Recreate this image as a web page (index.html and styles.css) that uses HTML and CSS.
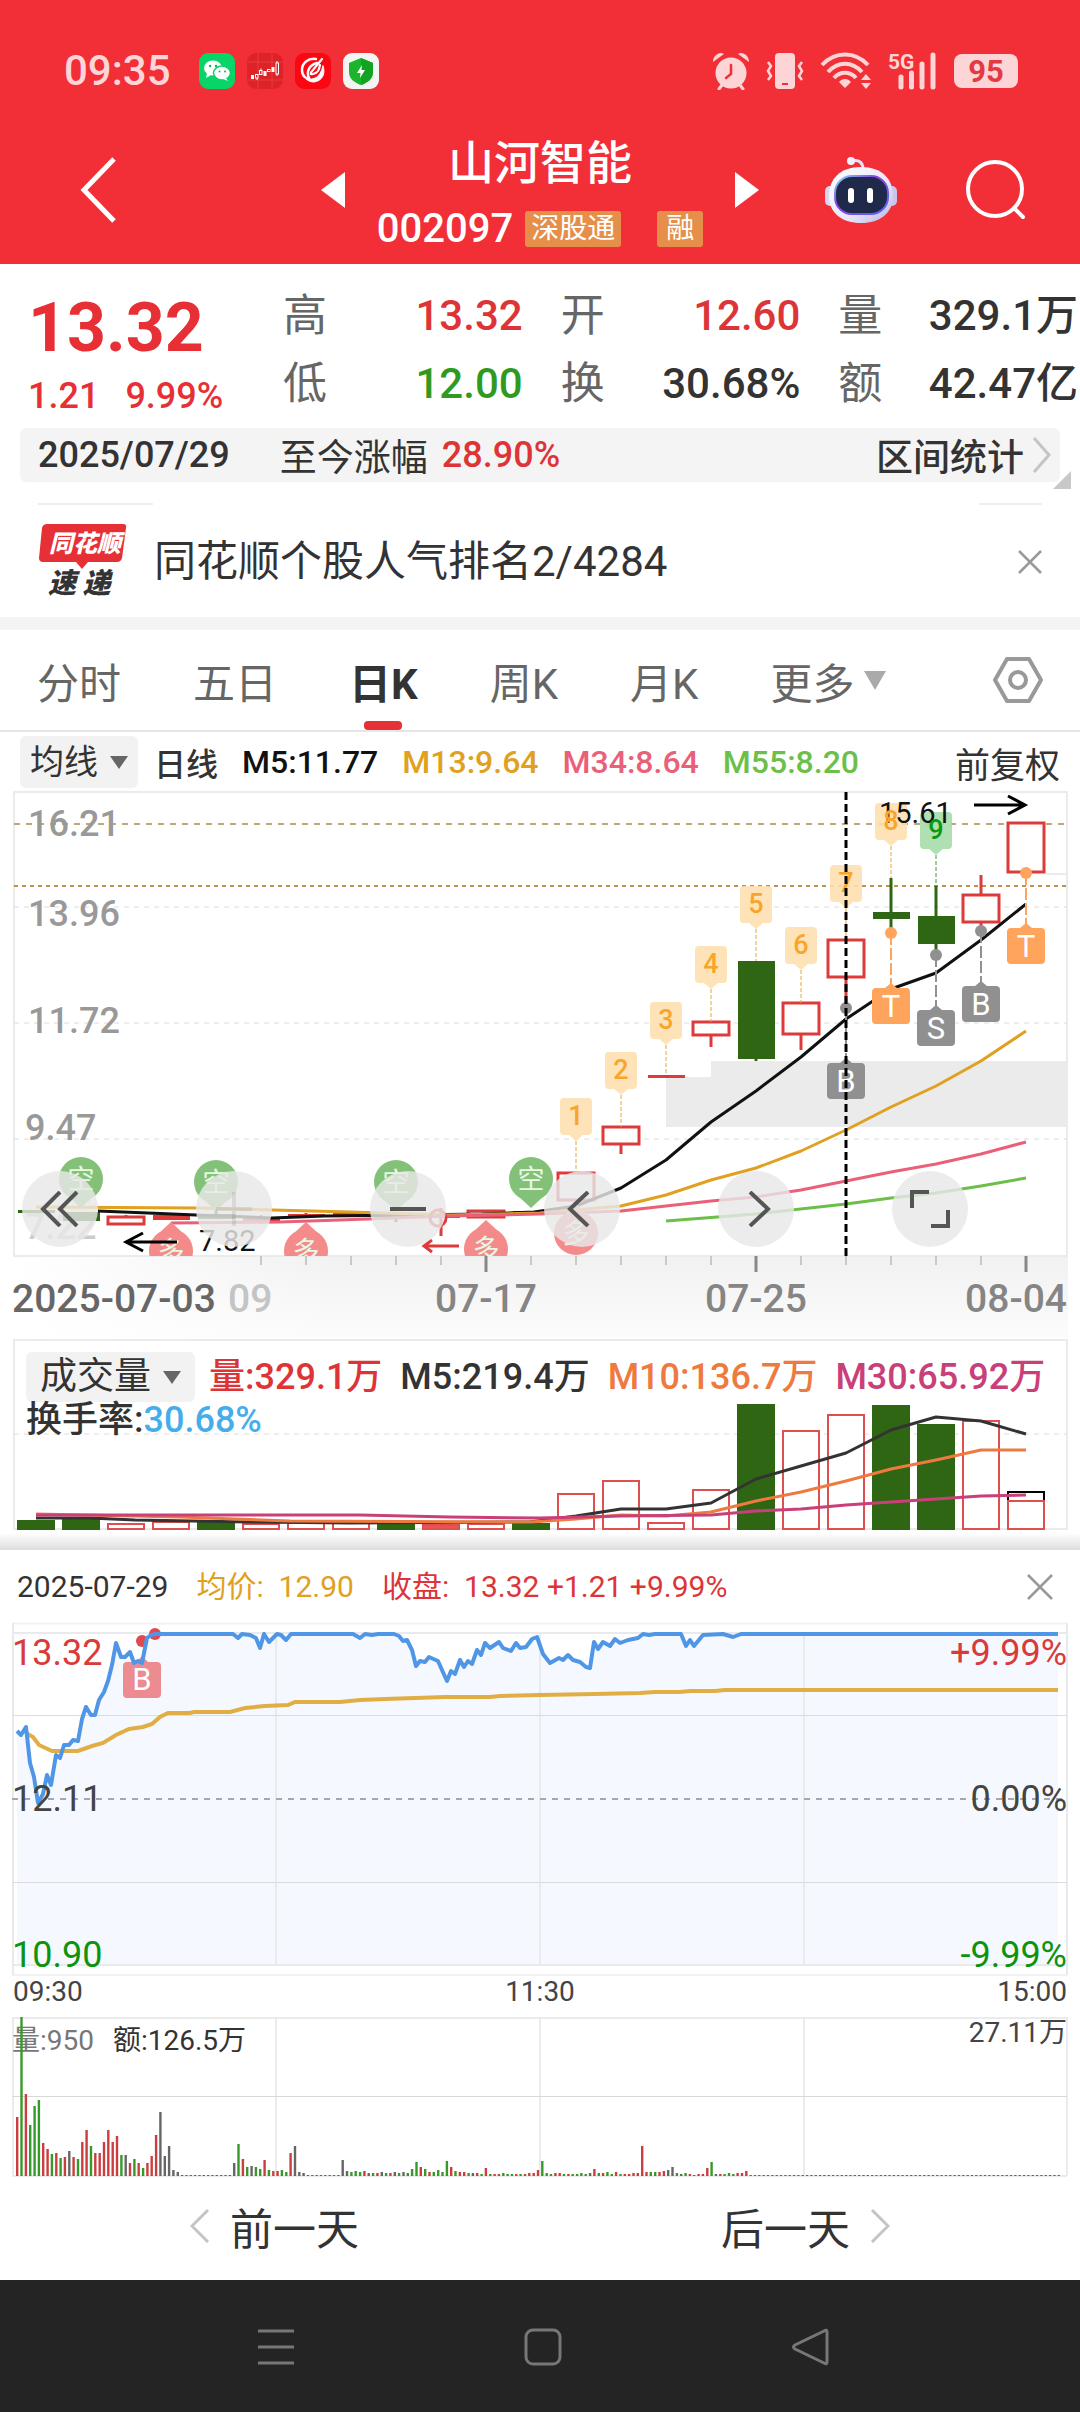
FILE: index.html
```html
<!DOCTYPE html>
<html lang="zh-CN">
  <head>
    <meta charset="UTF-8" />
    <meta name="viewport" content="width=device-width, initial-scale=1.0" />
    <title>山河智能 002097</title>
    <link rel="stylesheet" href="styles.css">
  </head>
  <body>
    <header class="header">
      <div class="status">
        <span class="status__time">09:35</span>
        <div class="status__apps">
          <svg class="app" viewBox="0 0 36 36">
            <rect width="36" height="36" rx="9" fill="#07d568"/>
            <ellipse cx="14" cy="15" rx="9" ry="7.5" fill="#fff"/><path d="M8 20l-1 5 5-3z" fill="#fff"/>
            <ellipse cx="23" cy="20" rx="8.5" ry="7" fill="#fff" stroke="#07d568" stroke-width="1.5"/><path d="M27 25l2 3-5-2z" fill="#fff"/>
            <g fill="#07b558"><circle cx="11" cy="13" r="1.2"/><circle cx="17" cy="13" r="1.2"/><circle cx="20.500" cy="18.500" r="1"/><circle cx="26" cy="18.500" r="1"/></g>
          </svg>
          <svg class="app" viewBox="0 0 36 36">
            <rect width="36" height="36" rx="9" fill="#de2328"/>
            <path d="M0 9h36M0 27h36M11 0v36M25 0v36" stroke="#ee4a4e" stroke-width=".6"/>
            <g fill="#fff"><rect x="4" y="22" width="3" height="4"/><rect x="16.500" y="18" width="3" height="5"/><rect x="24.500" y="14" width="3" height="5"/></g>
            <g fill="none" stroke="#fff"><rect x="8.500" y="21.500" width="2.500" height="3.500"/><rect x="12.500" y="17.500" width="2.500" height="4"/><rect x="20.500" y="16.500" width="2.500" height="2"/><rect x="29" y="10" width="2.500" height="11"/><path d="M10 25v2M14 15.500v2M30 8v2M30 21v2"/></g>
          </svg>
          <svg class="app" viewBox="0 0 36 36">
            <rect width="36" height="36" rx="9" fill="#fb0712"/>
            <g fill="none" stroke="#fff" stroke-linecap="round">
              <path d="M21 6C13 5 7 10 7 17c0 6 4 9 7 8-3-6 0-13 8-15" stroke-width="2.500"/>
              <path d="M27 6l-9 11c-3 3-3 5 0 4 5-1 6-4 7-9" stroke-width="2.200"/>
              <path d="M28 13c3 8-1 15-9 16-3 0-6-1-8-3 8 1 14-1 17-13z" fill="#fff" stroke-width="1"/>
            </g>
          </svg>
          <svg class="app" viewBox="0 0 36 36">
            <rect width="36" height="36" rx="9" fill="#f3f5f2"/>
            <path d="M18 5l12 5v9c0 7-6 11-12 13-6-2-12-6-12-13v-9z" fill="#1ab52b"/>
            <path d="M18 5l12 5v9c0 7-6 11-12 13z" fill="#13a322"/>
            <path d="M19 12l-5 8h3.500l-.500 5 5-8h-3.500z" fill="#fff"/>
          </svg>
        </div>
        <div class="status__system">
          <svg width="38" height="38" viewBox="0 0 38 38">
            <g fill="currentColor"><circle cx="19" cy="21" r="15.500"/><path d="M1 10C1 3 8-1 12 2zM37 10c0-7-7-11-11-8z"/></g>
            <path d="M10 33l-3 4M28 33l3 4" stroke="currentColor" stroke-width="3" stroke-linecap="round"/>
            <path d="M19 13v9l-5 4" fill="none" stroke="#f22f37" stroke-width="2.500" stroke-linecap="round"/>
          </svg>
          <svg width="38" height="38" viewBox="0 0 38 38">
            <rect x="9" y="1" width="20" height="36" rx="4" fill="currentColor"/>
            <path d="M16 32h6" stroke="#f22f37" stroke-width="2"/>
            <path d="M2 10l3 4-3 5 3 5-3 4M36 10l-3 4 3 5-3 5 3 4" fill="none" stroke="currentColor" stroke-width="2.500"/>
          </svg>
          <svg width="52" height="38" viewBox="0 0 52 38">
            <g fill="none" stroke="currentColor" stroke-width="4"><path d="M2 13c13-14 33-14 46 0M8 20c10-11 24-11 34 0M14 26c6-7 16-7 22 0"/></g>
            <path d="M25 36l-6-6c3-4 9-4 12 0zM46 22l5 6H41zM46 37l5-6H41z" fill="currentColor"/>
          </svg>
          <svg width="50" height="46" viewBox="0 -4 50 46">
            <text x="0" y="17" class="status__net">5G</text>
            <path d="M13 35V25M23.500 35V21M34 35V12M45 35V3" stroke="currentColor" stroke-width="5" stroke-linecap="round"/>
          </svg>
          <span class="battery">95</span>
        </div>
      </div>

      <nav class="nav">
        <button class="nav__back" aria-label="返回"><svg width="40" height="68" viewBox="0 0 40 68"><path d="M36 3L6 34l30 31" fill="none" stroke="#fff" stroke-width="5"/></svg></button>
        <button class="nav__prev" aria-label="上一只"><svg width="24" height="36" viewBox="0 0 24 36"><path d="M24 0v36L0 18z" fill="#fff"/></svg></button>
        <div class="nav__stock">
          <h1 class="nav__name">山河智能</h1>
          <div class="nav__code">002097 <span class="tag">深股通</span><span class="tag tag--last">融</span></div>
        </div>
        <button class="nav__next" aria-label="下一只"><svg width="24" height="36" viewBox="0 0 24 36"><path d="M0 0v36l24-18z" fill="#fff"/></svg></button>
        <button class="nav__robot" aria-label="智能助手">
          <svg width="72" height="68" viewBox="0 0 72 68">
            <defs>
              <linearGradient id="shell" x1="0" y1="0" x2="1" y2="1"><stop offset="0" stop-color="#fff"/><stop offset=".6" stop-color="#e9e6fa"/><stop offset="1" stop-color="#b9b4e4"/></linearGradient>
              <linearGradient id="rim" x1="0" y1="0" x2="1" y2="1"><stop offset="0" stop-color="#7ee0f2"/><stop offset=".4" stop-color="#8340e0"/><stop offset="1" stop-color="#5a68f0"/></linearGradient>
            </defs>
            <path d="M27 5c7-2 11 2 11 8" fill="none" stroke="#e5e2f4" stroke-width="3"/>
            <circle cx="26" cy="5" r="4" fill="#f2f0fa"/>
            <rect x="0" y="30" width="12" height="20" rx="5" fill="#d9d6f2"/><rect x="60" y="30" width="12" height="20" rx="5" fill="#c9c5ec"/>
            <path d="M36 11c21 0 32 12 32 29S55 67 36 67 4 57 4 40s11-29 32-29z" fill="url(#shell)"/>
            <rect x="10" y="20" width="53" height="38" rx="17" fill="#1f2949" stroke="url(#rim)" stroke-width="2"/>
            <rect x="23" y="32" width="6" height="15" rx="3" fill="#fff"/><rect x="42" y="32" width="6" height="15" rx="3" fill="#fff"/>
          </svg>
        </button>
        <button class="nav__search" aria-label="搜索"><svg width="62" height="62" viewBox="0 0 62 62"><g fill="none" stroke="#fff" stroke-width="4" stroke-linecap="round"><circle cx="30" cy="30" r="27"/><path d="M49 49l9 9"/></g></svg></button>
      </nav>
    </header>

    <main>
      <section class="quote">
        <div class="quote__main">
          <strong class="quote__price">13.32</strong>
          <div class="quote__change"><span>1.21</span><span>9.99%</span></div>
        </div>
        <dl class="quote__item"><dt>高</dt><dd class="up">13.32</dd><dt>低</dt><dd class="down">12.00</dd></dl>
        <dl class="quote__item"><dt>开</dt><dd class="up">12.60</dd><dt>换</dt><dd>30.68%</dd></dl>
        <dl class="quote__item"><dt>量</dt><dd>329.1万</dd><dt>额</dt><dd>42.47亿</dd></dl>
      </section>

      <div class="range">
        <span class="range__date">2025/07/29</span>
        <span class="range__label">至今涨幅</span>
        <span class="up">28.90%</span>
        <button class="range__stat">区间统计 <svg width="20" height="38" viewBox="0 0 20 38"><path d="M2 2l15 17L2 36" fill="none" stroke="#c4c4c4" stroke-width="3"/></svg></button>
        <svg class="range__corner" width="18" height="18" viewBox="0 0 18 18"><path d="M18 0v18H0z" fill="#c8c8c8"/></svg>
      </div>

      <section class="news">
        <svg class="news__logo" width="90" height="84" viewBox="0 -1 90 84">
          <path d="M9 3h76q4 0 3 4l-4 30q-1 4-5 4H50l-6 7-6-7H5q-4 0-4-4L4 7q1-4 5-4z" fill="#e73035"/>
          <text x="11" y="31" class="logo-top">同花顺</text>
          <text x="10" y="72" class="logo-bottom">速 递</text>
        </svg>
        <a class="news__text" href="#">同花顺个股人气排名2/4284</a>
        <button aria-label="关闭"><svg width="26" height="26" viewBox="0 0 26 26"><path d="M2 2l22 22M24 2L2 24" stroke="#999" stroke-width="2.500"/></svg></button>
      </section>

      <nav class="tabs">
        <button class="tab">分时</button>
        <button class="tab">五日</button>
        <button class="tab tab--active">日K</button>
        <button class="tab">周K</button>
        <button class="tab">月K</button>
        <button class="tab">更多 <svg width="22" height="19" viewBox="0 0 22 19"><path d="M0 0h22L11 19z" fill="#aaa"/></svg></button>
        <button class="tab tab--set" aria-label="设置"><svg width="50" height="48" viewBox="0 0 50 48"><g fill="none" stroke="#999" stroke-width="4" stroke-linejoin="round"><path d="M14 3h22l12 21-12 21H14L2 24z"/><circle cx="25" cy="24" r="8"/></g></svg></button>
      </nav>

      <div class="averages">
        <label class="picker">
          <select aria-label="主图指标"><option>均线</option></select>
          <svg width="18" height="13" viewBox="0 0 18 13"><path d="M0 0h18L9 13z" fill="#666"/></svg>
        </label>
        <span class="averages__unit">日线</span>
        <span class="m5">M5:11.77</span>
        <span class="m13">M13:9.64</span>
        <span class="m34">M34:8.64</span>
        <span class="m55">M55:8.20</span>
        <button class="averages__adjust">前复权</button>
      </div>

      <section class="kline">
        <svg class="chart" id="kline" viewBox="0 0 1080 548">
          <defs>
            <linearGradient id="axis" x1="0" y1="0" x2="0" y2="1"><stop offset="0" stop-color="#f1f1f1"/><stop offset="1" stop-color="#fcfcfc"/></linearGradient>
            <linearGradient id="fade" x1="0" y1="0" x2="1" y2="0"><stop offset="0" stop-color="#fff"/><stop offset="1" stop-color="#fff" stop-opacity="0"/></linearGradient>
            <clipPath id="plot"><rect x="13" y="0" width="1055" height="466"/></clipPath>
          </defs>
          <rect x="14" y="466" width="1054" height="82" fill="url(#axis)"/>
          <rect x="14" y="466" width="330" height="82" fill="url(#fade)"/>
          <rect x="14" y="2" width="1053" height="464" class="frame"/>
          <path d="M666 287h45v-16h357v66H666z" fill="#ebebeb"/>
          <path d="M1046 84h22" class="frame"/>
          <path d="M14 117h1053M14 233h1053M14 349h1053" class="grid"/>
          <path d="M14 34h1053" stroke="#bfa878" stroke-width="2" stroke-dasharray="6 6"/>
          <path d="M14 96h1053" stroke="#c09050" stroke-width="2" stroke-dasharray="4 4"/>
          <g class="scale">
            <text x="28" y="46">16.21</text><text x="28" y="136">13.96</text><text x="28" y="243">11.72</text><text x="25" y="350">9.47</text><text x="25" y="449" fill="#ccc">7.22</text>
          </g>
          <g id="candles"></g>
          <g fill="none" stroke-width="3" stroke-linejoin="round">
            <path d="M98 421L148 423L196 425L272 428L324 426L413 425L482 424L534 422L576 416L621 398L666 370L711 332L756 301L801 267L846 229L891 199L936 183L981 150L1026 114" stroke="#111"/>
            <path d="M36 417L196 418L350 422L450 425L540 423L621 416L666 405L711 390L756 378L801 361L846 340L891 317L936 296L981 271L1026 241" stroke="#e0a020"/>
            <path d="M171 433L280 432L340 430L450 426L540 424L621 421L666 416L711 411L756 407L801 400L846 391L891 382L936 374L981 364L1026 352" stroke="#ea6078"/>
            <path d="M666 431L756 424L846 414L891 408L936 403L981 396L1026 388" stroke="#6cbf48"/>
          </g>
          <g id="marks" clip-path="url(#plot)"></g>
          <g class="extreme"><text x="879" y="33">15.61</text><text x="199" y="461">7.82</text></g>
          <g id="counts"></g>
          <g fill="none" stroke="#000" stroke-width="3"><path d="M177 452h-50M143 443l-17 9 17 9M974 15h50M1008 6l17 9-17 9"/></g>
          <path d="M459 456h-34M432 450l-8 6 8 6" fill="none" stroke="#dd3b3b" stroke-width="3"/>
          <circle cx="438" cy="428" r="8" fill="none" stroke="#dd3b3b" stroke-width="3"/>
          <path d="M846 2v464" stroke="#000" stroke-width="3" stroke-dasharray="8 4"/>
          <g id="ticks"></g>
          <g class="dates"><text x="12" y="522" fill="#666">2025-07-03</text><text x="228" y="522" fill="#c4c4c4">09</text><text x="486" y="522" text-anchor="middle">07-17</text><text x="756" y="522" text-anchor="middle">07-25</text><text x="1067" y="522" text-anchor="end">08-04</text></g>
        </svg>
        <div class="tools">
          <button class="tool" aria-label="最左"><svg width="40" height="36" viewBox="0 0 40 36"><path d="M20 1L3 18l17 17M37 1L20 18l17 17"/></svg></button>
          <button class="tool" aria-label="放大"><svg width="40" height="36" viewBox="0 0 40 36"><path d="M2 18h36M20 1v34" opacity=".12"/></svg></button>
          <button class="tool" aria-label="缩小"><svg width="40" height="36" viewBox="0 0 40 36"><path d="M2 18h36"/></svg></button>
          <button class="tool" aria-label="左移"><svg width="40" height="36" viewBox="0 0 40 36"><path d="M26 1L8 18l18 17"/></svg></button>
          <button class="tool" aria-label="右移"><svg width="40" height="36" viewBox="0 0 40 36"><path d="M14 1l18 17-18 17"/></svg></button>
          <button class="tool" aria-label="全屏"><svg width="40" height="38" viewBox="0 0 40 38"><path d="M2 18V2h17M38 20v16H21"/></svg></button>
        </div>
      </section>

      <section class="volume">
        <svg class="chart" id="volume" viewBox="0 0 1080 194">
          <rect x="14" y="2" width="1053" height="189" class="frame"/>
          <path d="M14 96h1053" class="grid"/>
          <g id="volumeBars"></g>
          <g fill="none" stroke-width="3" stroke-linejoin="round">
            <path d="M36 180L90 180L135 182L250 184L350 185L530 184L576 178L621 171L666 171L711 165L756 141L801 128L846 115L891 92L936 79L981 83L1026 96" stroke="#333"/>
            <path d="M36 176L180 179L290 183L530 184L576 181L621 177L666 178L711 174L756 163L801 154L846 143L891 131L936 122L981 112L1026 112" stroke="#ee7a40"/>
            <path d="M36 177L360 177L450 179L540 180L621 178L711 177L756 173L801 171L846 167L891 164L936 161L981 158L1026 157" stroke="#c94079"/>
          </g>
        </svg>
        <div class="volume__head">
          <div class="volume__row">
            <label class="picker picker--large">
              <select aria-label="副图指标"><option>成交量</option></select>
              <svg width="18" height="13" viewBox="0 0 18 13"><path d="M0 0h18L9 13z" fill="#666"/></svg>
            </label>
            <span class="up">量:329.1万</span>
            <span>M5:219.4万</span>
            <span class="m10">M10:136.7万</span>
            <span class="m30">M30:65.92万</span>
          </div>
          <div class="volume__turnover">换手率:<span>30.68%</span></div>
        </div>
      </section>
      <div class="edge"></div>

      <section class="sheet">
        <div class="sheet__head">
          <span>2025-07-29</span>
          <span class="sheet__avg">均价: &nbsp;12.90</span>
          <span class="up">收盘: &nbsp;13.32 +1.21 +9.99%</span>
          <button aria-label="关闭"><svg width="28" height="28" viewBox="0 0 28 28"><path d="M2 2l24 24M26 2L2 26" stroke="#999" stroke-width="2.500"/></svg></button>
        </div>

        <svg class="chart" viewBox="0 0 1080 356">
          <path id="trendFill" fill="#f5f9ff"/>
          <path d="M12 3.500h1055M12 355h1055" stroke="#f2f2f2" stroke-width="2"/>
          <path d="M13 3v352M276 13v332M540 13v332M804 13v332M1067 3v352M12 13h1055M12 345h1055" stroke="#e8eaed" stroke-width="2"/>
          <path d="M12 95.500h1055M12 262.500h1055" stroke="#dadcdf"/>
          <path d="M12 179h1055" stroke="#a5a8ae" stroke-width="2" stroke-dasharray="6 6"/>
          <g fill="#e2484e"><circle cx="142" cy="21" r="6"/><circle cx="155" cy="14" r="6"/></g>
          <path d="M127 42h9l6-6 6 6h9q4 0 4 4v28q0 4-4 4h-30q-4 0-4-4V46q0-4 4-4z" fill="#ec8b90"/>
          <text x="142" y="70" class="flag-letter">B</text>
          <path d="M26 113L33 117L39 125L52 131L78 131L92 126L103 123L116 115L129 109L143 107L152 104L160 97L168 93L190 93L194 92L230 92L245 88L265 86L288 85L295 82L340 82L360 80L385 79L415 78L445 77L490 77L500 76L540 75L595 74L640 73L655 72L680 72L690 71L715 71L725 70L1058 70" fill="none" stroke="#e0ae45" stroke-width="4"/>
          <path id="trend" fill="none" stroke="#5096e6" stroke-width="4" stroke-linejoin="round"/>
          <g class="prices">
            <text x="12" y="45" fill="#d93a3a">13.32</text><text x="12" y="191">12.11</text><text x="12" y="347" fill="#0d930d">10.90</text>
            <g text-anchor="end"><text x="1067" y="45" fill="#d93a3a">+9.99%</text><text x="1067" y="191">0.00%</text><text x="1067" y="347" fill="#0d930d">-9.99%</text></g>
          </g>
        </svg>
        <div class="times"><span>09:30</span><span>11:30</span><span>15:00</span></div>
        <svg class="chart" viewBox="0 0 1080 162">
          <path d="M12 2h1055M13 1v159M276 1v159M540 1v159M804 1v159M1067 1v159M12 160h1055" stroke="#ebebeb" stroke-width="2"/>
          <path d="M12 80.500h1055" stroke="#d8d8d8"/>
          <g class="minor"><text x="12" y="34" fill="#777">量:950</text><text x="113" y="34" fill="#333">额:126.5万</text><text x="1067" y="26" text-anchor="end">27.11万</text></g>
          <g id="minuteBars"></g>
        </svg>

        <div class="pager">
          <button class="pager__btn"><svg width="20" height="36" viewBox="0 0 20 36"><path d="M18 2L2 18l16 16"/></svg>前一天</button>
          <button class="pager__btn">后一天<svg width="20" height="36" viewBox="0 0 20 36"><path d="M2 2l16 16L2 34"/></svg></button>
        </div>
      </section>
    </main>

    <footer class="system">
      <button aria-label="菜单"><svg width="38" height="38" viewBox="0 0 38 38"><path d="M1 3h36M1 19h36M1 35h36"/></svg></button>
      <button aria-label="主页"><svg width="38" height="38" viewBox="0 0 38 38"><rect x="2" y="2" width="34" height="34" rx="7"/></svg></button>
      <button aria-label="返回"><svg width="38" height="38" viewBox="0 0 38 38"><path d="M36 4v30q0 3-3 1L4 21q-3-2 0-4L33 3q3-2 3 1z"/></svg></button>
    </footer>
    <script src="charts.js"></script>
  </body>
</html>
```
FILE: styles.css
```css
*{margin:0;padding:0;box-sizing:border-box;}
body{background:#fff;color:#333;font-family:Roboto,"Noto Sans CJK SC",sans-serif;overflow-x:hidden;}
button,select{border:none;background:none;color:inherit;font:inherit;appearance:none;cursor:pointer;}
button{display:flex;align-items:center;justify-content:center;}
a{color:inherit;text-decoration:none;}
svg{display:block;flex:none;}
.chart{width:100%;height:auto;}
.up{color:#dd3438;}
.down{color:#2f9a1f;}
.m5{color:#111;}
.m13{color:#e0a020;}
.m34{color:#ea6078;}
.m55{color:#6cbf48;}
.m10{color:#ee7a40;}
.m30{color:#c94079;}

/* header */
.header{background:#f22f37;color:#fff;padding-top:48px;}
.status{height:46px;display:flex;align-items:center;padding:0 62px 0 64px;color:#fdd5d7;}
.status__time{font-size:42px;font-weight:500;line-height:46px;}
.status__apps{display:flex;gap:12px;margin-left:28px;}
.app{width:36px;height:36px;}
.status__system{display:flex;align-items:center;gap:16px;margin-left:auto;}
.status__net{font-size:21px;font-weight:700;fill:currentColor;}
.battery{width:64px;height:34px;border-radius:8px;background:#fdd5d7;color:#e23a42;font-size:31px;font-weight:700;line-height:35px;text-align:center;}
.nav{height:170px;display:flex;align-items:center;padding:22px 53px 0 78px;}
.nav__prev{margin-left:203px;}
.nav__stock{flex:1;display:flex;flex-direction:column;align-items:center;gap:14px;}
.nav__name{font-size:46px;font-weight:500;line-height:64px;}
.nav__code{display:flex;align-items:center;gap:12px;font-size:40px;font-weight:500;line-height:40px;}
.tag{background:#e58f4b;border-radius:3px;padding:0 6px;font-size:28px;font-weight:400;line-height:36px;}
.tag--last{margin-left:24px;padding:0 9px;}
.nav__robot{margin-left:66px;}
.nav__search{margin-left:68px;}

/* quote */
.quote{display:grid;grid-template-columns:217px 1fr 1fr 1fr;column-gap:38px;padding:18px 2px 10px 28px;}
.quote__main{padding-top:9px;color:#e73035;}
.quote__price{display:block;font-size:68px;line-height:74px;font-weight:700;}
.quote__change{display:flex;gap:26px;margin-top:10px;font-size:36px;font-weight:500;line-height:42px;}
.quote__item{display:grid;grid-template-columns:auto 1fr;align-items:center;grid-auto-rows:68px;}
.quote__item dt{font-size:44px;color:#666;line-height:68px;}
.quote__item dd{font-size:42px;font-weight:500;line-height:68px;text-align:right;white-space:nowrap;}
.range{position:relative;display:flex;align-items:center;height:54px;margin:0 20px;padding:0 8px 0 18px;border-radius:6px;background:#f4f4f4;font-size:36px;font-weight:500;}
.range__label{margin:0 14px 0 50px;font-size:37px;font-weight:400;}
.range__stat{margin-left:auto;gap:8px;font-size:37px;white-space:nowrap;}
.range__corner{position:absolute;right:-11px;bottom:-7px;}

/* news */
.news{display:flex;align-items:center;height:148px;padding:24px 37px 0 38px;border-bottom:13px solid #f4f4f4;
  background:linear-gradient(#eee,#eee) 38px 21px/115px 2px no-repeat,linear-gradient(#eee,#eee) calc(100% - 38px) 21px/63px 2px no-repeat;}
.news__text{flex:1;margin-left:26px;font-size:42px;line-height:60px;}
.logo-top{font:italic 900 24px "Noto Sans CJK SC",sans-serif;fill:#fff;}
.logo-bottom{font:italic 900 28px "Noto Sans CJK SC",sans-serif;fill:#333;}

/* tabs */
.tabs{display:flex;gap:72px;height:102px;padding:0 37px;border-bottom:2px solid #e6e6e6;}
.tab{position:relative;gap:10px;font-size:42px;color:#666;white-space:nowrap;}
.tab--active{color:#333;font-weight:700;}
.tab--active::after{content:"";position:absolute;bottom:0;left:50%;width:38px;height:9px;margin-left:-19px;border-radius:4px;background:#e73035;}
.tab--set{margin-left:auto;}
.averages{display:flex;align-items:center;gap:24px;height:58px;padding:2px 20px 0;font-size:32px;font-weight:500;white-space:nowrap;}
.averages__unit{margin-left:-8px;}
.averages__adjust{margin-left:auto;font-size:35px;font-weight:400;}
.picker{display:flex;align-items:center;gap:12px;height:52px;padding:0 10px;border-radius:6px;background:#f2f2f2;font-size:34px;font-weight:400;}
.picker--large{height:50px;padding:0 14px;font-size:37px;}

/* charts */
.frame{fill:none;stroke:#ebebeb;stroke-width:2;}
.grid{stroke:#dcdcdc;stroke-dasharray:5 5;}
.scale{fill:#999;font-size:36px;font-weight:500;}
.extreme{fill:#111;font-size:29px;}
.dates{fill:#858585;font-size:39px;font-weight:500;}
.count{font-size:27px;font-weight:500;text-anchor:middle;fill:#f9a52a;}
.count--green{fill:#0a9a10;}
.flag-letter{font-size:31px;text-anchor:middle;fill:#fff;}
.balloon{font-size:27px;text-anchor:middle;fill:#e8f8e4;}
.kline{position:relative;}
.tools{position:absolute;left:22px;right:112px;top:381px;display:flex;justify-content:space-between;}
.tool{width:76px;height:76px;border-radius:50%;background:rgba(232,232,232,.82);}
.tool path{fill:none;stroke:#555;stroke-width:4;}
.volume{display:grid;}
.volume .chart,.volume__head{grid-area:1/1;}
.volume__head{padding:14px 26px 0;font-size:36px;font-weight:500;}
.volume__row{display:flex;align-items:center;gap:18px;white-space:nowrap;line-height:50px;}
.volume__row .picker{margin-right:-4px;}
.volume__turnover{line-height:36px;}
.volume__turnover span{color:#45aeea;}
.edge{height:18px;border-top:1px solid #fff;background:linear-gradient(#fff,#ddd);}

/* day detail */
.sheet__head{display:flex;align-items:center;gap:28px;height:70px;padding:4px 26px 0 17px;font-size:30px;line-height:40px;white-space:nowrap;}
.sheet__head button{margin-left:auto;}
.sheet__avg{color:#e0a020;}
.prices{font-size:36px;fill:#444;}
.times{display:flex;justify-content:space-between;padding:0 13px 8px;font-size:28px;line-height:32px;color:#444;}
.minor{font-size:28px;fill:#444;}
.pager{display:flex;justify-content:center;gap:362px;height:102px;padding-bottom:6px;}
.pager__btn{gap:20px;font-size:43px;white-space:nowrap;}
.pager__btn path{fill:none;stroke:#c4c4c4;stroke-width:3;}
.system{display:flex;justify-content:center;gap:229px;height:133px;padding-left:6px;background:#242424;}
.system svg{fill:none;stroke:#777;stroke-width:3;}
```
FILE: charts.js
```js
(function () {
  var UP = "#dd3b3b";
  var DOWN = "#2f6613";

  function put(id, html) {
    document.getElementById(id).innerHTML = html;
  }
  function xAt(i) {
    return 36 + 45 * i;
  }

  // [color, body top, body bottom, wick top, wick bottom]
  var candles = [
    ["g", 420, 423, 420, 423], ["g", 422, 431, 422, 431], ["r", 427, 434, 425, 434],
    ["R", 425, 430, 425, 430], ["g", 424, 429, 420, 429], ["R", 428, 432, 425, 434],
    ["R", 424, 427, 423, 427], ["R", 423, 426, 423, 426], ["g", 424, 428, 424, 432],
    ["R", 426, 428, 418, 446], ["r", 421, 427, 420, 428], ["g", 421, 424, 421, 424],
    ["r", 383, 410, 383, 410], ["r", 337, 354, 337, 364], ["R", 285, 288, 285, 288],
    ["r", 232, 245, 232, 257], ["g", 171, 269, 171, 271], ["r", 213, 244, 213, 260],
    ["r", 150, 187, 150, 216], ["g", 122, 129, 88, 142], ["g", 126, 154, 96, 164],
    ["r", 105, 132, 85, 141], ["r", 33, 82, 33, 82]
  ];
  put("candles", candles.map(function (c, i) {
    var x = xAt(i);
    var color = c[0] === "g" ? DOWN : UP;
    var fill = c[0] === "r" ? "#fff" : color;
    var body = c[0] === "r"
      ? `<rect x="${x - 18}" y="${c[1]}" width="36" height="${c[2] - c[1]}" fill="${fill}" stroke="${color}" stroke-width="3"/>`
      : `<rect x="${x - 18}" y="${c[1]}" width="37" height="${c[2] - c[1]}" fill="${fill}"/>`;
    return `<path d="M${x} ${c[3]}V${c[4]}" stroke="${color}" stroke-width="3"/>` + body;
  }).join(""));

  var marks = "";
  var counts = "";

  // day counters above the candles: [index, top of the flag]
  [[12, 308], [13, 262], [14, 212], [15, 156], [16, 96], [17, 137], [18, 75], [19, 13], [20, 22]].forEach(function (m, n) {
    var x = xAt(m[0]);
    var y = m[1];
    var green = n === 8;
    marks += `<path d="M${x} ${y + 43}V${candles[m[0]][3]}" stroke="${green ? "#3a9a3a" : "#e0a63a"}" stroke-dasharray="4 2"/>
      <path d="M${x - 12} ${y}h24q4 0 4 4v29q0 4-4 4h-5l-7 6-7-6h-5q-4 0-4-4v-29q0-4 4-4z" fill="${green ? "#a5dba8" : "#ffdfae"}" opacity=".88"/>`;
    counts += `<text x="${x}" y="${y + 27}" class="count${green ? " count--green" : ""}">${n + 1}</text>`;
  });

  // trades: [index, dot y, box top, letter, color]
  [[18, 218, 273, "B", "#909090"], [19, 143, 198, "T", "#ffa45c"], [20, 165, 220, "S", "#909090"],
    [21, 141, 196, "B", "#909090"], [22, 83, 138, "T", "#ffa45c"]].forEach(function (t) {
    var x = xAt(t[0]);
    marks += `<circle cx="${x}" cy="${t[1]}" r="6" fill="${t[4]}"/>
      <path d="M${x} ${t[1]}V${t[2]}" stroke="${t[4]}" stroke-width="2" stroke-dasharray="12 3"/>
      <path d="M${x - 15} ${t[2]}h9l6-5 6 5h9q4 0 4 4v28q0 4-4 4h-30q-4 0-4-4v-28q0-4 4-4z" fill="${t[4]}"/>
      <text x="${x}" y="${t[2] + 29}" class="flag-letter">${t[3]}</text>`;
  });

  [[1, 389], [4, 392], [8, 392], [11, 389]].forEach(function (b) {
    var x = xAt(b[0]);
    marks += `<circle cx="${x}" cy="${b[1]}" r="22" fill="#84c178"/><path d="M${x - 14} ${b[1] + 16}L${x} ${b[1] + 29}L${x + 14} ${b[1] + 16}z" fill="#84c178"/>
      <text x="${x}" y="${b[1] + 10}" class="balloon">空</text>`;
  });
  [[3, 461], [6, 461], [10, 459], [12, 443]].forEach(function (b) {
    var x = xAt(b[0]);
    marks += `<circle cx="${x}" cy="${b[1]}" r="22" fill="#f58a8a"/><path d="M${x - 14} ${b[1] - 16}L${x} ${b[1] - 29}L${x + 14} ${b[1] - 16}z" fill="#f58a8a"/>
      <text x="${x}" y="${b[1] + 10}" class="balloon">多</text>`;
  });
  put("marks", marks);
  put("counts", counts);

  var ticks = "";
  for (var i = 5; i < 23; i++) {
    var major = i === 10 || i === 16 || i === 22;
    ticks += `<path d="M${xAt(i)} 466v${major ? 16 : 9}" stroke="${major ? "#888" : "#c8c8c8"}" stroke-width="${major ? 3 : 2}"/>`;
  }
  put("ticks", ticks);

  // daily volume
  var volumes = "g183 g181 r186 r184 g184 r186 r185 r185 g185 R187 r186 g186 r156 r143 r185 r152 g67 r93 r77 g68 g87 r83 r163";
  put("volumeBars", volumes.split(" ").map(function (v, i) {
    var y = +v.slice(1);
    var type = v[0];
    var fill = type === "g" ? DOWN : type === "R" ? "#f05050" : "#fff";
    return `<rect x="${xAt(i) - 18}" y="${y}" width="36" height="${191 - y}" fill="${fill}" stroke="${type === "g" ? DOWN : "#dd5050"}" stroke-width="2"/>`;
  }).join("") + `<path d="M1008 162v-8h36v8" fill="none" stroke="#000" stroke-width="2"/>`);

  // intraday price
  var trend = "17,111 21,115 26,107 30,143 34,157 38,183 43,174 47,155 51,165 56,135 60,138 64,125 69,125 73,120 78,121 82,99 86,87 91,95 95,95 99,80 104,72 108,61 112,45 116,23 121,37 125,37 130,32 134,43 138,41 142,43 147,18 151,15 156,14 233,14 238,18 242,14 250,15 256,18 260,28 264,14 269,22 277,14 281,15 286,20 291,14 353,14 360,18 365,14 372,15 378,14 394,14 399,16 403,21 407,20 412,30 416,46 420,41 425,42 429,37 438,41 442,50 447,61 451,51 455,54 460,40 464,47 468,41 472,44 477,30 481,35 485,23 490,28 499,22 503,28 511,31 516,23 520,28 526,27 532,19 537,17 543,34 550,43 559,38 563,40 568,35 573,40 580,42 586,47 590,48 594,22 598,29 603,22 610,26 615,19 620,23 628,20 638,18 643,14 649,15 655,14 681,14 686,26 690,20 694,26 703,15 723,14 733,17 741,14 1058,14";
  var line = "M" + trend.split(" ").join("L");
  document.getElementById("trend").setAttribute("d", line);
  document.getElementById("trendFill").setAttribute("d", line + "V345H17z");

  // volume per minute, color letter and height; "k1*12" repeats a bar
  var minutes = "r59 g159 r82 g51 g70 g76 r33 r27 g22 r23 g18 r19 k25 r19 g17 r34 r46 g30 r23 r23 r34 r46 r34 r40 g21 k21 r13 g17 r13 g8 r13 r20 r41 k64 k20 k30 k6 k4 k1*12 k13 g32 r17 g9 k10 g9 g7 r16 g6 r5 r5 g6 g4 r23 k30 k4 k3 k1*8 k16 k5 g4 g5 g4 r5 k3 g3 r3 k4 g3 r3 k4 g3 k4 g3 g7 g14 r9 g7 r4 g4 g6 g4 g15 r9 g5 r4 r4 g3 k3 r3 g2 r8 g2 r2 r2 g3 g2 g2 r2 g2 r2 r3 r3 r6 g15 g3 g2 r3 r3 g2 r2 g2 g2 g3 g2 k3 r7 g3 r3 g4 g2 r4 g2 r2 r2 r3 r3 r30 r4 g4 g4 r4 r5 k6 k9 g3 k2 g3 r2 k1 r2 r2 r8 g14 k2 r2 g2 g3 g2 r3 r3 r5 k1*72";
  var colors = { r: "#cc3d40", g: "#369a2a", k: "#666" };
  var n = 0;
  var bars = "";
  minutes.split(" ").forEach(function (m) {
    var parts = m.slice(1).split("*");
    for (var k = 0; k < (+parts[1] || 1); k++) {
      bars += `<rect x="${(16 + n * 4.34).toFixed(1)}" y="${160 - parts[0]}" width="2.4" height="${parts[0]}" fill="${colors[m[0]]}"/>`;
      n++;
    }
  });
  put("minuteBars", bars);
})();
```
